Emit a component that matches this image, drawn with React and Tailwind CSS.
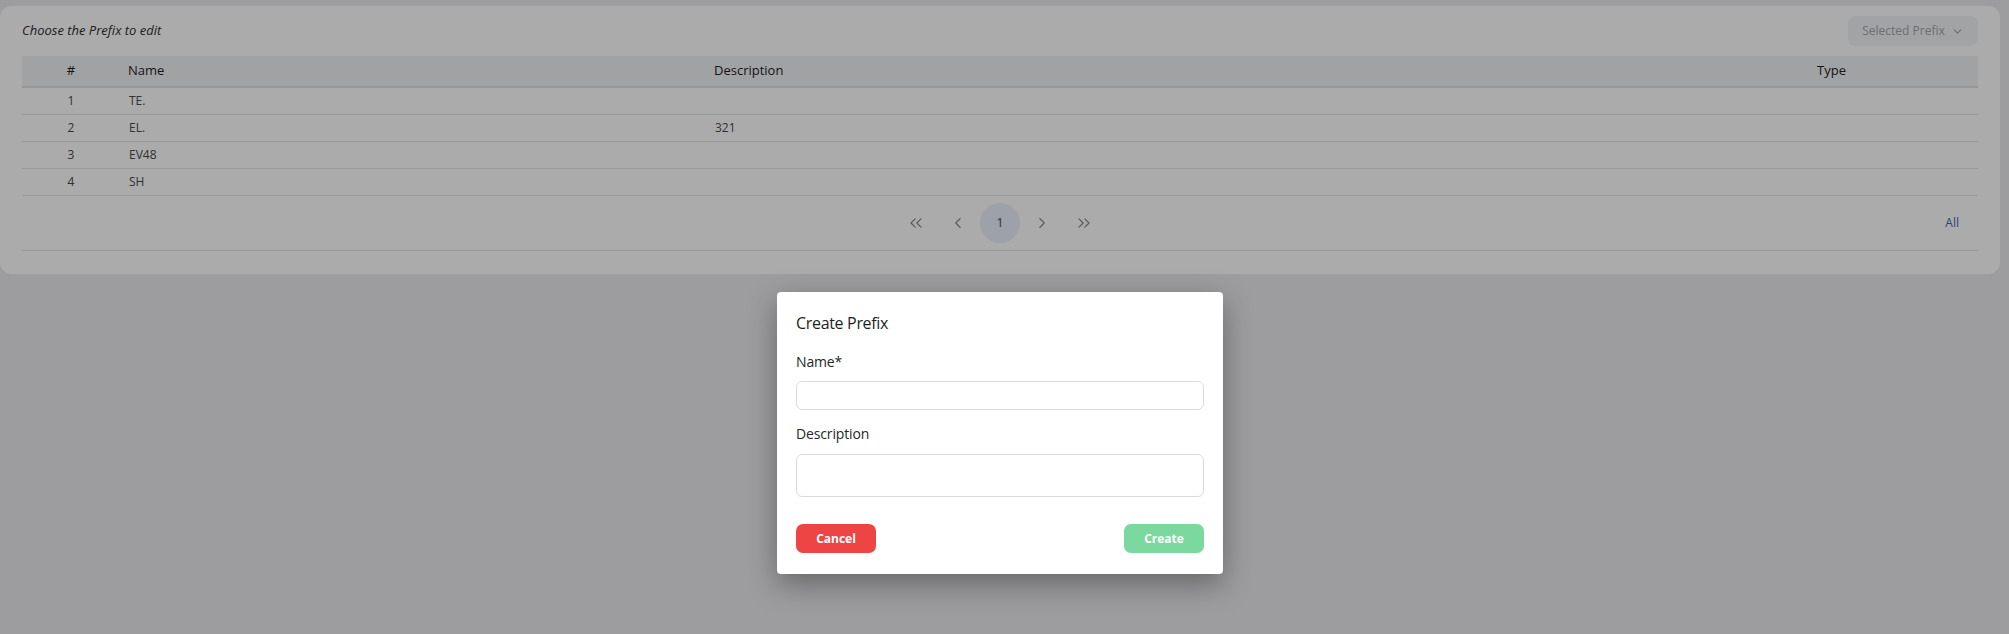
import React from "react";
import { ChevronDown, ChevronLeft, ChevronRight, ChevronsLeft, ChevronsRight } from "lucide-react";

const rows = [
  { n: 1, name: "TE.", desc: "", type: "" },
  { n: 2, name: "EL.", desc: "321", type: "" },
  { n: 3, name: "EV48", desc: "", type: "" },
  { n: 4, name: "SH", desc: "", type: "" },
];

const grid = "grid grid-cols-[98px_586px_1103px_1fr]";

export default function App() {
  return (
    <div
      className="relative min-h-[634px] w-full overflow-hidden bg-[#eaebee]"
      style={{ fontFamily: '"Segoe UI", "Open Sans", "Noto Sans", sans-serif' }}
    >
      <div className="pt-[6px] pr-[9px]">
        <div className="rounded-xl bg-white px-[22px] pt-[10px] pb-[23px]">
          <div className="flex h-[30px] items-center justify-between">
            <p className="text-[13px] italic text-[#2e2e2e]">Choose the Prefix to edit</p>
            <button className="flex h-[30px] w-[130px] items-center justify-center gap-[6px] rounded-lg bg-[#f2f3f5] text-[12px] text-[#a3a6ad]">
              Selected Prefix
              <ChevronDown size={13} strokeWidth={2} />
            </button>
          </div>

          <div className="mt-[10px]">
            <div className={`${grid} h-[32px] items-center border-b-2 border-[#e0e1e4] bg-[#f1f2f4] text-[13px] text-[#1f1f1f]`}>
              <div className="text-center">#</div>
              <div className="pl-[8px]">Name</div>
              <div className="pl-[8px]">Description</div>
              <div className="pl-[8px]">Type</div>
            </div>
            {rows.map((r) => (
              <div key={r.n} className={`${grid} h-[27px] items-center border-b border-[#e3e4e7] text-[12px] text-[#4a4a4a]`}>
                <div className="text-center">{r.n}</div>
                <div className="pl-[9px]">{r.name}</div>
                <div className="pl-[9px]">{r.desc}</div>
                <div className="pl-[9px]">{r.type}</div>
              </div>
            ))}
            <div className="grid h-[55px] grid-cols-[1fr_auto_1fr] items-center border-b border-[#e3e4e7]">
              <div />
              <div className="flex items-center gap-[2px] text-[#85888e]">
                <span className="flex h-[40px] w-[40px] items-center justify-center">
                  <ChevronsLeft size={20} strokeWidth={1.5} />
                </span>
                <span className="flex h-[40px] w-[40px] items-center justify-center">
                  <ChevronLeft size={18} strokeWidth={1.5} />
                </span>
                <span className="flex h-[40px] w-[40px] items-center justify-center rounded-full bg-[#eaf1fb] text-[13px] text-[#475063]">
                  1
                </span>
                <span className="flex h-[40px] w-[40px] items-center justify-center">
                  <ChevronRight size={18} strokeWidth={1.5} />
                </span>
                <span className="flex h-[40px] w-[40px] items-center justify-center">
                  <ChevronsRight size={20} strokeWidth={1.5} />
                </span>
              </div>
              <div className="flex justify-end pr-[19px] text-[12px] text-[#4f60a8]">All</div>
            </div>
          </div>
        </div>
      </div>

      <div className="absolute inset-0 flex items-start justify-center bg-black/[0.33] pt-[292px] pr-[9px]">
        <div className="w-[446px] rounded-[4px] bg-white px-[19px] pt-[19px] pb-[21px] shadow-[0_10px_30px_rgba(0,0,0,0.35)]">
          <h2 className="text-[16px] leading-[24px] font-medium tracking-[-0.02em] text-[#1e1e1e]">Create Prefix</h2>
          <label className="mt-[17px] block text-[14px] leading-[20px] tracking-[-0.01em] text-[#262626]">Name*</label>
          <input className="mt-[9px] block h-[29px] w-full rounded-md border border-[#d9dbe0] bg-white px-2 text-[13px] outline-none" />
          <label className="mt-[14px] block text-[14px] leading-[20px] tracking-[-0.01em] text-[#262626]">Description</label>
          <textarea className="mt-[10px] block h-[43px] w-full resize-none rounded-md border border-[#d9dbe0] bg-white px-2 text-[13px] outline-none" />
          <div className="mt-[27px] flex items-center justify-between">
            <button className="h-[29px] w-[80px] rounded-[7px] bg-[#ef4444] text-[12px] font-bold text-white">Cancel</button>
            <button className="h-[29px] w-[80px] rounded-[7px] bg-[#7bd89e] text-[12px] font-bold text-white">Create</button>
          </div>
        </div>
      </div>
    </div>
  );
}
